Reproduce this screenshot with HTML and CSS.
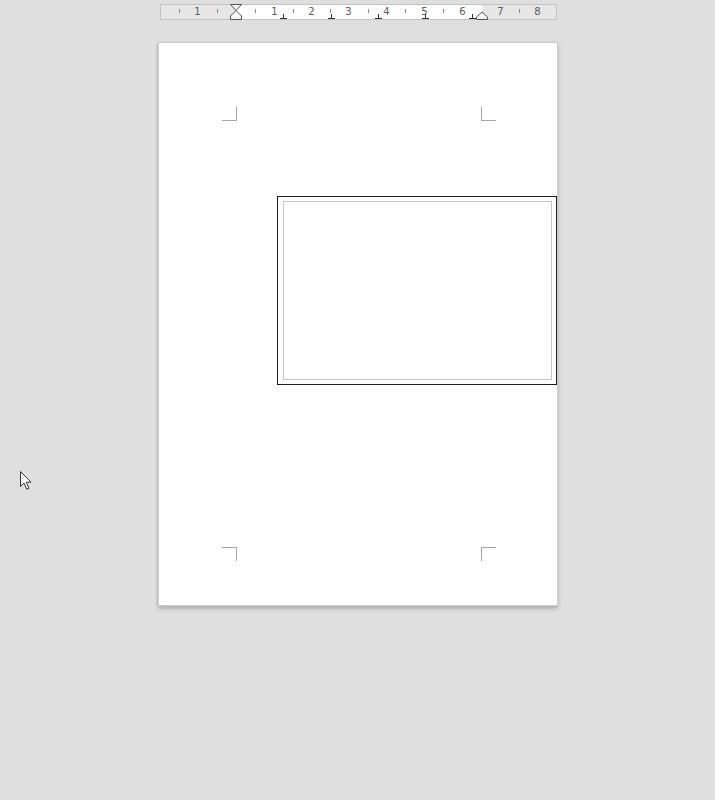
FILE: index.html
```html
<!DOCTYPE html>
<html>
<head>
<meta charset="utf-8">
<link rel="stylesheet" href="styles.css">
</head>
<body>
<div class="workspace">
  <div class="ruler">
    <svg width="397" height="16" viewBox="0 0 397 16" class="ruler-svg">
      <rect x="0.5" y="0.5" width="396" height="15" fill="#e6e6e6" stroke="#c3c3c3"/>
      <rect x="76" y="1" width="246" height="14" fill="#ffffff"/>
      <g stroke="#8a8a8a" stroke-width="1">
        <line x1="19.5" y1="5" x2="19.5" y2="9"/>
        <line x1="57.5" y1="5" x2="57.5" y2="9"/>
        <line x1="95.5" y1="5" x2="95.5" y2="9"/>
        <line x1="133.5" y1="5" x2="133.5" y2="9"/>
        <line x1="170.5" y1="5" x2="170.5" y2="9"/>
        <line x1="208.5" y1="5" x2="208.5" y2="9"/>
        <line x1="245.5" y1="5" x2="245.5" y2="9"/>
        <line x1="283.5" y1="5" x2="283.5" y2="9"/>
        <line x1="359.5" y1="5" x2="359.5" y2="9"/>
      </g>
      <g class="num" text-anchor="middle">
        <text x="37.5" y="7.5">1</text>
        <text x="114.5" y="7.5">1</text>
        <text x="151.5" y="7.5">2</text>
        <text x="188.5" y="7.5">3</text>
        <text x="226.5" y="7.5">4</text>
        <text x="264.5" y="7.5">5</text>
        <text x="302.5" y="7.5">6</text>
        <text x="340.5" y="7.5">7</text>
        <text x="377.5" y="7.5">8</text>
      </g>
      <g stroke="#333" stroke-width="1" fill="none">
        <path d="M123.5 10 V14.5 M120 14.5 H127"/>
        <path d="M171.5 10 V14.5 M168 14.5 H175"/>
        <path d="M218.5 10 V14.5 M215 14.5 H222"/>
        <path d="M265.5 10 V14.5 M262 14.5 H269"/>
        <path d="M312.5 10 V14.5 M309 14.5 H316"/>
      </g>
      <g stroke="#555" stroke-width="1" fill="#f4f4f4">
        <path d="M70.5 0.5 H81.5 L76 6.5 Z"/>
        <path d="M76 6.5 L70.5 12 V15.5 H81.5 V12 Z"/>
        <path d="M322 8 L316.5 13 V15.5 H327.5 V13 Z"/>
      </g>
    </svg>
  </div>
  <div class="page">
    <span class="mark tl"></span>
    <span class="mark tr"></span>
    <span class="mark bl"></span>
    <span class="mark br"></span>
    <div class="frame">
      <div class="frame-inner"></div>
    </div>
  </div>
</div>
<svg class="cursor" width="14" height="21" viewBox="0 0 14 21">
  <path d="M1.5 1.5 V16.5 L5 13 L7.8 19.2 L10 18.2 L7.3 12.2 H12 Z" fill="#ffffff" stroke="#333" stroke-width="1" stroke-linejoin="miter"/>
</svg>
</body>
</html>
```
FILE: styles.css
```css
html, body {
  margin: 0;
  padding: 0;
}
body {
  background: #dfdfdf;
  width: 715px;
  height: 800px;
  overflow: hidden;
  font-family: "Liberation Sans", Arial, sans-serif;
  position: relative;
}
.workspace {
  display: flex;
  flex-direction: column;
  align-items: flex-start;
  padding-top: 4px;
}
.ruler {
  width: 397px;
  height: 16px;
  margin-left: 160px;
}
.ruler-svg {
  display: block;
}
.num {
  font-family: "DejaVu Sans", sans-serif;
  font-size: 10px;
  fill: #5a5a5a;
  dominant-baseline: middle;
}
.page {
  position: relative;
  margin-top: 22px;
  margin-left: 158px;
  width: 398px;
  background: #ffffff;
  border: 1px solid #cdcdcd;
  box-shadow: 0 3px 4px rgba(0, 0, 0, 0.2), -1px 0 2px rgba(0, 0, 0, 0.06);
  padding-top: 153px;
  box-sizing: content-box;
  height: 409px;
}
.mark {
  position: absolute;
  width: 14px;
  height: 13px;
  border-color: #a6a6a6;
  border-style: solid;
  border-width: 0;
}
.mark.tl { left: 63px; top: 64px; border-right-width: 1px; border-bottom-width: 1px; }
.mark.tr { left: 322px; top: 64px; border-left-width: 1px; border-bottom-width: 1px; }
.mark.bl { left: 63px; top: 504px; border-right-width: 1px; border-top-width: 1px; }
.mark.br { left: 322px; top: 504px; border-left-width: 1px; border-top-width: 1px; }
.frame {
  margin-left: 118px;
  width: 280px;
  height: 189px;
  border: 1px solid #1e1e1e;
  box-sizing: border-box;
  padding: 4px 4px 4px 5px;
}
.frame-inner {
  width: 100%;
  height: 100%;
  border: 1px solid #c4c4c4;
  box-sizing: border-box;
}
.cursor {
  position: absolute;
  left: 19px;
  top: 470px;
}
```
